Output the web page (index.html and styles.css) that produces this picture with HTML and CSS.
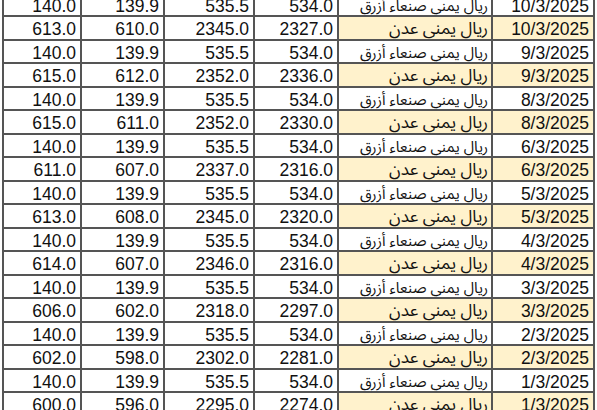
FILE: index.html
```html
<!DOCTYPE html>
<html lang="ar">
<head>
<meta charset="utf-8">
<title>Rates</title>
<link rel="stylesheet" href="styles.css">
</head>
<body>
<div class="sheet">
  <div class="row"><div class="c">140.0</div><div class="c">139.9</div><div class="c">535.5</div><div class="c">534.0</div><div class="c name long" dir="rtl">ريال يمني صنعاء أزرق</div><div class="c">10/3/2025</div></div>
  <div class="row aden"><div class="c">613.0</div><div class="c">610.0</div><div class="c">2345.0</div><div class="c">2327.0</div><div class="c name" dir="rtl">ريال يمني عدن</div><div class="c">10/3/2025</div></div>
  <div class="row"><div class="c">140.0</div><div class="c">139.9</div><div class="c">535.5</div><div class="c">534.0</div><div class="c name long" dir="rtl">ريال يمني صنعاء أزرق</div><div class="c">9/3/2025</div></div>
  <div class="row aden"><div class="c">615.0</div><div class="c">612.0</div><div class="c">2352.0</div><div class="c">2336.0</div><div class="c name" dir="rtl">ريال يمني عدن</div><div class="c">9/3/2025</div></div>
  <div class="row"><div class="c">140.0</div><div class="c">139.9</div><div class="c">535.5</div><div class="c">534.0</div><div class="c name long" dir="rtl">ريال يمني صنعاء أزرق</div><div class="c">8/3/2025</div></div>
  <div class="row aden"><div class="c">615.0</div><div class="c">611.0</div><div class="c">2352.0</div><div class="c">2330.0</div><div class="c name" dir="rtl">ريال يمني عدن</div><div class="c">8/3/2025</div></div>
  <div class="row"><div class="c">140.0</div><div class="c">139.9</div><div class="c">535.5</div><div class="c">534.0</div><div class="c name long" dir="rtl">ريال يمني صنعاء أزرق</div><div class="c">6/3/2025</div></div>
  <div class="row aden"><div class="c">611.0</div><div class="c">607.0</div><div class="c">2337.0</div><div class="c">2316.0</div><div class="c name" dir="rtl">ريال يمني عدن</div><div class="c">6/3/2025</div></div>
  <div class="row"><div class="c">140.0</div><div class="c">139.9</div><div class="c">535.5</div><div class="c">534.0</div><div class="c name long" dir="rtl">ريال يمني صنعاء أزرق</div><div class="c">5/3/2025</div></div>
  <div class="row aden"><div class="c">613.0</div><div class="c">608.0</div><div class="c">2345.0</div><div class="c">2320.0</div><div class="c name" dir="rtl">ريال يمني عدن</div><div class="c">5/3/2025</div></div>
  <div class="row"><div class="c">140.0</div><div class="c">139.9</div><div class="c">535.5</div><div class="c">534.0</div><div class="c name long" dir="rtl">ريال يمني صنعاء أزرق</div><div class="c">4/3/2025</div></div>
  <div class="row aden"><div class="c">614.0</div><div class="c">607.0</div><div class="c">2346.0</div><div class="c">2316.0</div><div class="c name" dir="rtl">ريال يمني عدن</div><div class="c">4/3/2025</div></div>
  <div class="row"><div class="c">140.0</div><div class="c">139.9</div><div class="c">535.5</div><div class="c">534.0</div><div class="c name long" dir="rtl">ريال يمني صنعاء أزرق</div><div class="c">3/3/2025</div></div>
  <div class="row aden"><div class="c">606.0</div><div class="c">602.0</div><div class="c">2318.0</div><div class="c">2297.0</div><div class="c name" dir="rtl">ريال يمني عدن</div><div class="c">3/3/2025</div></div>
  <div class="row"><div class="c">140.0</div><div class="c">139.9</div><div class="c">535.5</div><div class="c">534.0</div><div class="c name long" dir="rtl">ريال يمني صنعاء أزرق</div><div class="c">2/3/2025</div></div>
  <div class="row aden"><div class="c">602.0</div><div class="c">598.0</div><div class="c">2302.0</div><div class="c">2281.0</div><div class="c name" dir="rtl">ريال يمني عدن</div><div class="c">2/3/2025</div></div>
  <div class="row"><div class="c">140.0</div><div class="c">139.9</div><div class="c">535.5</div><div class="c">534.0</div><div class="c name long" dir="rtl">ريال يمني صنعاء أزرق</div><div class="c">1/3/2025</div></div>
  <div class="row aden"><div class="c">600.0</div><div class="c">596.0</div><div class="c">2295.0</div><div class="c">2274.0</div><div class="c name" dir="rtl">ريال يمني عدن</div><div class="c">1/3/2025</div></div>
</div>
</body>
</html>
```

FILE: styles.css
```css
html, body {
  margin: 0;
  padding: 0;
  background: #ffffff;
  overflow: hidden;
}

body {
  width: 597px;
  height: 410px;
}

.sheet {
  margin: -8.5px 0 0 2px;
  width: 593px;
  box-sizing: border-box;
  padding: 2px;
  background: #555555;
  display: flex;
  flex-direction: column;
  gap: 2px;
  font-family: "Liberation Sans", Arial, sans-serif;
  font-size: 17.5px;
  color: #111111;
}

.row {
  display: grid;
  grid-template-columns: 76px 81px 88px 82px 152px 100px;
  gap: 2px;
  height: 21.5px;
}

.c {
  background: #ffffff;
  display: flex;
  align-items: flex-end;
  justify-content: flex-end;
  padding: 0 4px 0 0;
  line-height: 1;
  white-space: nowrap;
  overflow: hidden;
}

.c.name {
  justify-content: flex-start;
  padding: 0 3px 1px 0;
  font-family: "Noto Sans Arabic", "DejaVu Sans", sans-serif;
  font-size: 17px;
}

.c.name.long {
  font-size: 15px;
}

.aden .c:nth-child(5),
.aden .c:nth-child(6) {
  background: #fff2cc;
}
```
